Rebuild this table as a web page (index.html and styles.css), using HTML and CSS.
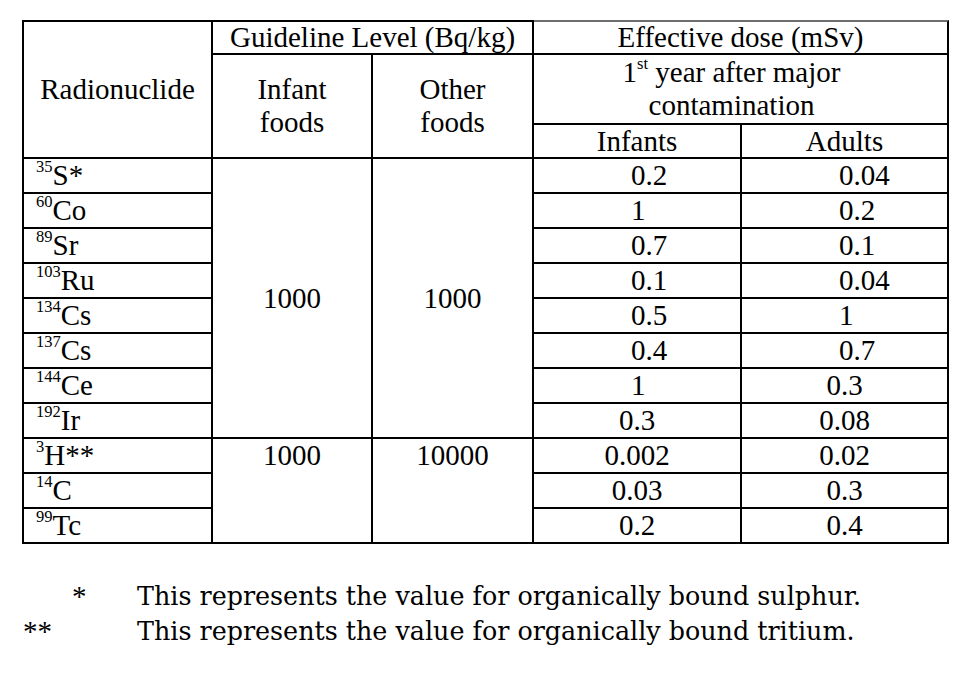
FILE: index.html
```html
<!DOCTYPE html>
<html lang="en">
<head>
<meta charset="utf-8">
<title>Guideline levels for radionuclides</title>
<link rel="stylesheet" href="styles.css">
</head>
<body>
<table class="dose">
  <colgroup>
    <col class="c1"><col class="c2"><col class="c3"><col class="c4"><col class="c5">
  </colgroup>
  <thead>
    <tr class="h1">
      <th rowspan="3" class="top">Radionuclide</th>
      <th colspan="2" class="top">Guideline Level (Bq/kg)</th>
      <th colspan="2" class="top top-grey">Effective dose (mSv)</th>
    </tr>
    <tr class="h2">
      <th rowspan="2">Infant<br>foods</th>
      <th rowspan="2">Other<br>foods</th>
      <th colspan="2" class="year">1<sup>st</sup> year after major<br>contamination</th>
    </tr>
    <tr class="h3">
      <th>Infants</th>
      <th>Adults</th>
    </tr>
  </thead>
  <tbody>
    <tr><td class="nuc"><sup>35</sup>S*</td><td rowspan="8">1000</td><td rowspan="8">1000</td><td class="ind">0.2</td><td class="ind">0.04</td></tr>
    <tr><td class="nuc"><sup>60</sup>Co</td><td class="ind">1</td><td class="ind">0.2</td></tr>
    <tr><td class="nuc"><sup>89</sup>Sr</td><td class="ind">0.7</td><td class="ind">0.1</td></tr>
    <tr><td class="nuc"><sup>103</sup>Ru</td><td class="ind">0.1</td><td class="ind">0.04</td></tr>
    <tr><td class="nuc"><sup>134</sup>Cs</td><td class="ind">0.5</td><td class="ind">1</td></tr>
    <tr><td class="nuc"><sup>137</sup>Cs</td><td class="ind">0.4</td><td class="ind">0.7</td></tr>
    <tr><td class="nuc"><sup>144</sup>Ce</td><td class="ind">1</td><td>0.3</td></tr>
    <tr><td class="nuc"><sup>192</sup>Ir</td><td>0.3</td><td>0.08</td></tr>
    <tr><td class="nuc"><sup>3</sup>H**</td><td rowspan="3" class="at-top">1000</td><td rowspan="3" class="at-top">10000</td><td>0.002</td><td>0.02</td></tr>
    <tr><td class="nuc"><sup>14</sup>C</td><td>0.03</td><td>0.3</td></tr>
    <tr><td class="nuc"><sup>99</sup>Tc</td><td>0.2</td><td>0.4</td></tr>
  </tbody>
</table>

<div class="notes">
  <p class="note"><span class="mark mark-one">*</span><span class="note-text">This represents the value for organically bound sulphur.</span></p>
  <p class="note"><span class="mark mark-two">**</span><span class="note-text">This represents the value for organically bound tritium.</span></p>
</div>
</body>
</html>
```

FILE: styles.css
```css
html, body {
  margin: 0;
  padding: 0;
  background: #fff;
  color: #000;
}

.dose {
  border-collapse: separate;
  border-spacing: 0;
  border-left: 2px solid #000;
  table-layout: fixed;
  width: 927px;
  margin: 20px 0 0 22px;
  font-family: "Liberation Serif", "Times New Roman", serif;
  font-size: 29px;
}

.c1 { width: 189px; }
.c2 { width: 160px; }
.c3 { width: 161px; }
.c4 { width: 208px; }
.c5 { width: 207px; }

.dose th,
.dose td {
  border-right: 2px solid #000;
  border-bottom: 2px solid #000;
  padding: 0;
  text-align: center;
  vertical-align: middle;
  font-weight: normal;
  line-height: 33px;
  white-space: nowrap;
}

.dose .top {
  border-top: 2px solid #000;
}

.dose .top-grey {
  border-top-color: #6e6e6e;
}

.h1 th {
  line-height: 31px;
}

.h3 th {
  line-height: 32px;
}

.dose .year {
  padding: 1px 18px 1px 0;
}

.dose sup {
  font-size: 16.5px;
  line-height: 0;
  vertical-align: 13.5px;
}

.dose .nuc {
  text-align: left;
  padding-left: 12px;
}

.dose .ind {
  text-align: left;
  padding-left: 97px;
}

.dose .at-top {
  vertical-align: top;
}

.notes {
  margin-top: 35px;
  font-family: "DejaVu Serif", "Liberation Serif", serif;
  font-size: 25.4px;
  line-height: 35px;
}

.note {
  margin: 0;
  display: flex;
}

.mark {
  width: 137px;
  flex: none;
  box-sizing: border-box;
  font-family: "Liberation Serif", serif;
  font-size: 29px;
}

.mark-one { padding-left: 72px; }
.mark-two { padding-left: 23px; }
```
